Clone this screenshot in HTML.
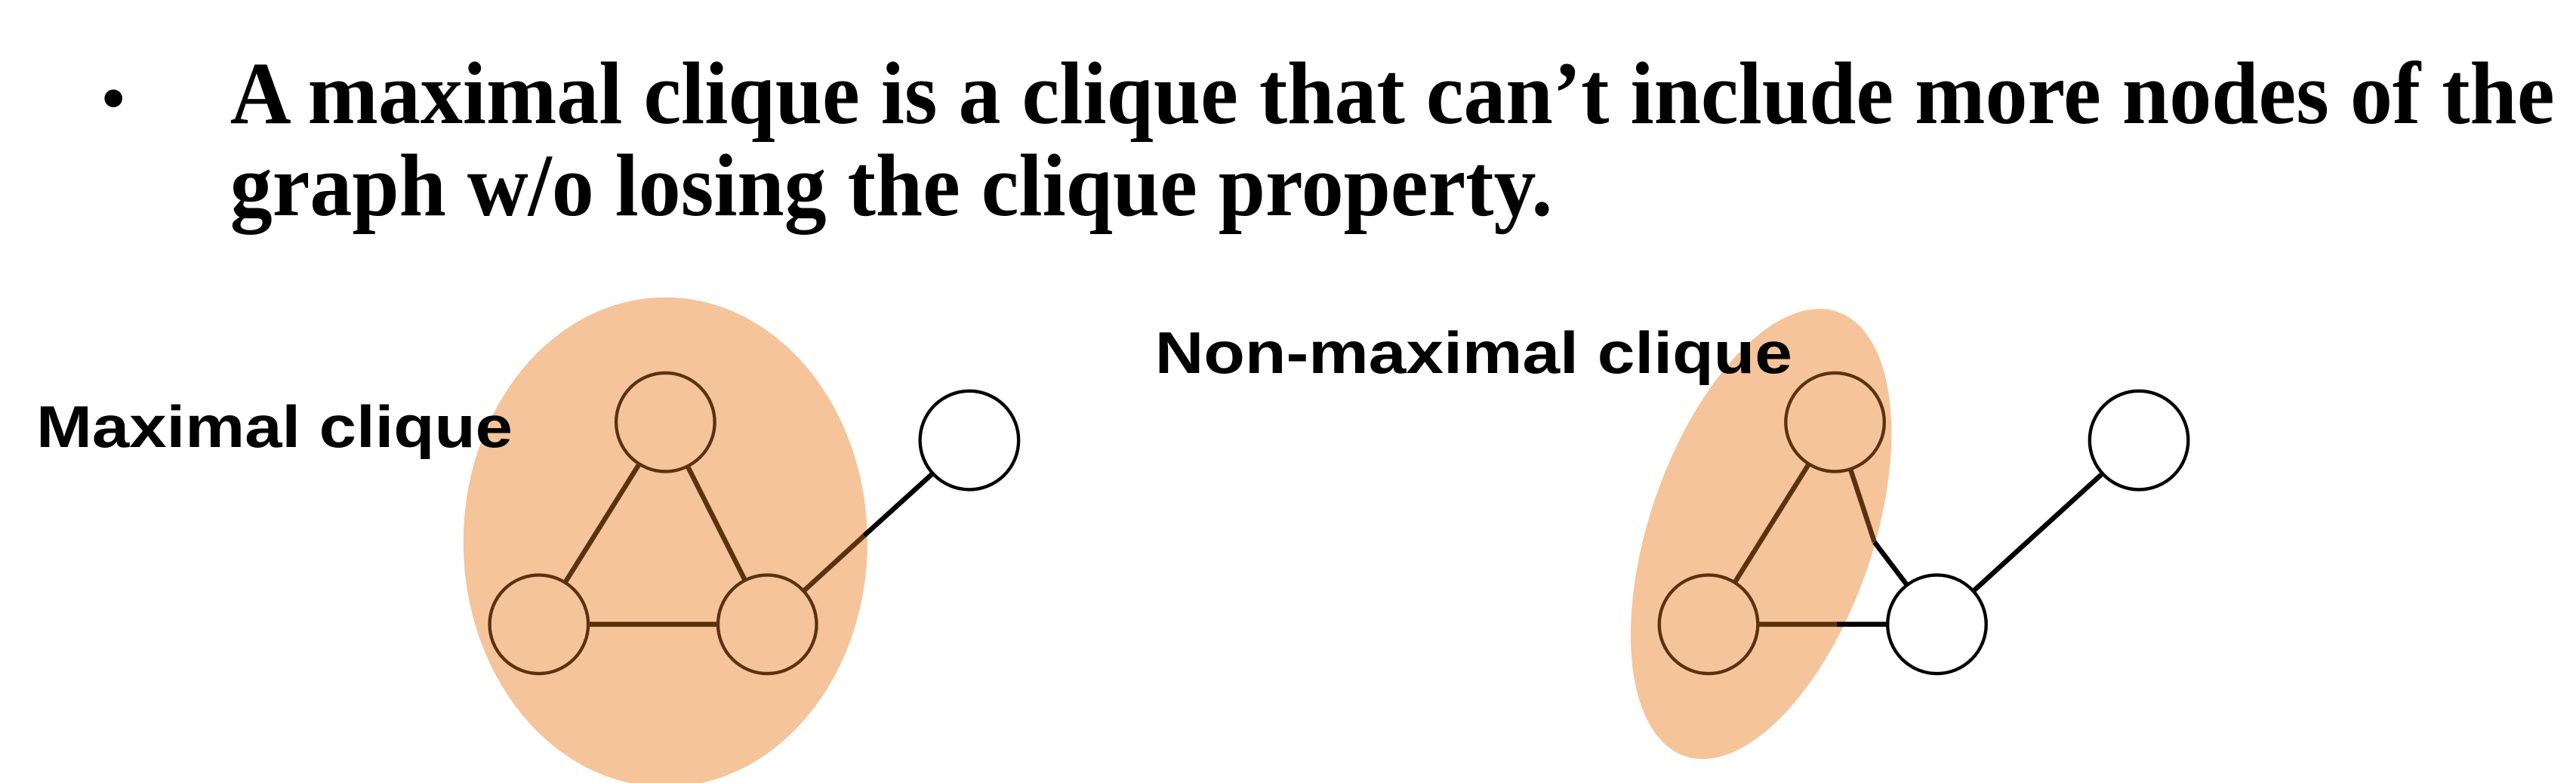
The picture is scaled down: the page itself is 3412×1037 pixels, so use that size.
<!DOCTYPE html>
<html><head><meta charset="utf-8"><style>html,body{margin:0;padding:0;background:#fff;width:3412px;height:1037px;overflow:hidden}</style></head>
<body>
<svg width="3412" height="1037" viewBox="0 0 1568 476.6" xmlns="http://www.w3.org/2000/svg">
<g font-family="'Liberation Serif', serif" font-weight="bold" font-size="54" fill="#000">
<text x="62" y="73" font-size="40">•</text>
<text x="140" y="75" textLength="1415" lengthAdjust="spacingAndGlyphs">A maximal clique is a clique that can’t include more nodes of the</text>
<text x="140" y="131" textLength="805" lengthAdjust="spacingAndGlyphs">graph w/o losing the clique property.</text>
</g>
<ellipse cx="405" cy="330" rx="123" ry="149" fill="#f5c49a"/>
<ellipse cx="1072" cy="325" rx="68" ry="143" fill="#f5c49a" transform="rotate(19 1072 325)"/>
<g stroke-width="3" fill="none">
<line x1="405" y1="257" x2="328" y2="380" stroke="#5a3210"/>
<line x1="405" y1="257" x2="467" y2="380" stroke="#5a3210"/>
<line x1="328" y1="380" x2="467" y2="380" stroke="#5a3210"/>
<line x1="467" y1="380" x2="526" y2="326" stroke="#5a3210"/>
<line x1="526" y1="326" x2="590" y2="268" stroke="#000"/>
<line x1="1117" y1="257" x2="1040" y2="380" stroke="#5a3210"/>
<line x1="1117" y1="257" x2="1141" y2="330" stroke="#5a3210"/>
<line x1="1141" y1="330" x2="1179" y2="380" stroke="#000"/>
<line x1="1040" y1="380" x2="1118" y2="380" stroke="#5a3210"/>
<line x1="1118" y1="380" x2="1179" y2="380" stroke="#000"/>
<line x1="1179" y1="380" x2="1302" y2="268" stroke="#000"/>
</g>
<g stroke-width="2">
<circle cx="405" cy="257" r="30" fill="#f5c49a" stroke="#5a3210"/>
<circle cx="328" cy="380" r="30" fill="#f5c49a" stroke="#5a3210"/>
<circle cx="467" cy="380" r="30" fill="#f5c49a" stroke="#5a3210"/>
<circle cx="590" cy="268" r="30" fill="#fff" stroke="#000"/>
<circle cx="1117" cy="257" r="30" fill="#f5c49a" stroke="#5a3210"/>
<circle cx="1040" cy="380" r="30" fill="#f5c49a" stroke="#5a3210"/>
<circle cx="1179" cy="380" r="30" fill="#fff" stroke="#000"/>
<circle cx="1302" cy="268" r="30" fill="#fff" stroke="#000"/>
</g>
<g font-family="'Liberation Sans', sans-serif" font-weight="bold" font-size="36" fill="#000">
<text x="22" y="272" textLength="290" lengthAdjust="spacingAndGlyphs">Maximal clique</text>
<text x="703" y="227" textLength="388" lengthAdjust="spacingAndGlyphs">Non-maximal clique</text>
</g>
</svg>
</body></html>
